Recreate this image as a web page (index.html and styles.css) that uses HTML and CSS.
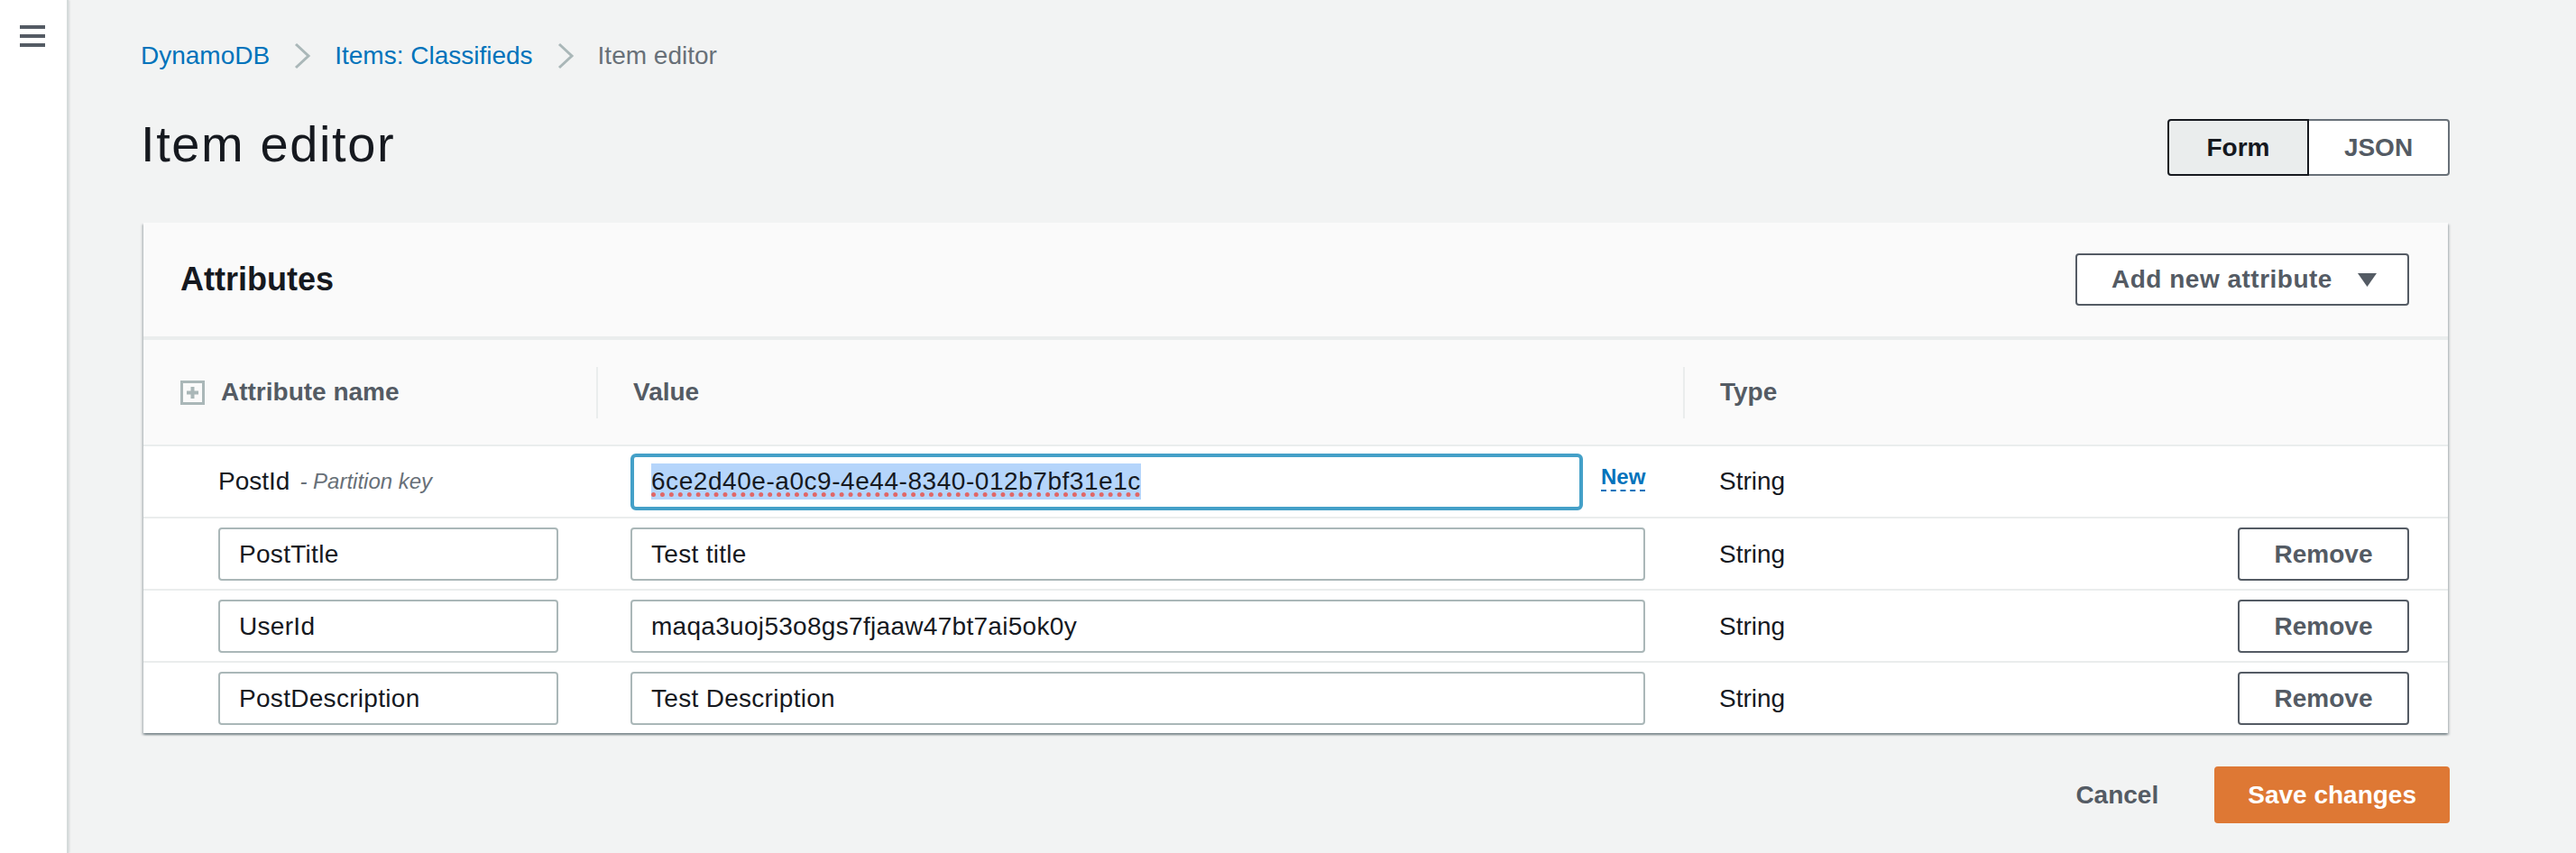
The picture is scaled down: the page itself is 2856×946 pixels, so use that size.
FILE: index.html
```html
<!DOCTYPE html>
<html lang="en">
<head>
<meta charset="utf-8">
<title>Item editor</title>
<link rel="stylesheet" href="styles.css">
</head>
<body>
<div class="app">
  <aside class="sidebar">
    <button class="menu-btn" aria-label="Open navigation">
      <svg width="28" height="24" viewBox="0 0 28 24">
        <rect x="0" y="0" width="28" height="4" fill="#545b64"/>
        <rect x="0" y="10" width="28" height="4" fill="#545b64"/>
        <rect x="0" y="20" width="28" height="4" fill="#545b64"/>
      </svg>
    </button>
  </aside>
  <main class="main">
    <nav class="breadcrumbs">
      <a class="crumb-link" href="#">DynamoDB</a>
      <svg class="chev" width="20" height="30" viewBox="0 0 20 30"><polyline points="3,2 17,15 3,28" fill="none" stroke="#aab7b8" stroke-width="3"/></svg>
      <a class="crumb-link" href="#">Items: Classifieds</a>
      <svg class="chev" width="20" height="30" viewBox="0 0 20 30"><polyline points="3,2 17,15 3,28" fill="none" stroke="#aab7b8" stroke-width="3"/></svg>
      <span class="crumb-current">Item editor</span>
    </nav>

    <div class="page-header">
      <h1 class="page-title">Item editor</h1>
      <div class="seg">
        <button class="seg-btn seg-active">Form</button>
        <button class="seg-btn seg-idle">JSON</button>
      </div>
    </div>

    <section class="panel">
      <div class="panel-header">
        <h2 class="panel-title">Attributes</h2>
        <button class="btn btn-dropdown">
          <span>Add new attribute</span>
          <svg class="caret" width="21" height="15" viewBox="0 0 21 15"><polygon points="0,0 21,0 10.5,15" fill="#545b64"/></svg>
        </button>
      </div>

      <div class="thead">
        <div class="hcell hcell-first">
          <svg class="expand-icon" width="27" height="27" viewBox="0 0 27 27">
            <rect x="1.5" y="1.5" width="24" height="24" fill="#fafafa" stroke="#aab7b8" stroke-width="3"/>
            <rect x="11.5" y="7" width="4" height="13" fill="#aab7b8"/>
            <rect x="7" y="11.5" width="13" height="4" fill="#aab7b8"/>
          </svg>
          <span class="htext">Attribute name</span>
        </div>
        <div class="hcell"><span class="col-sep"></span><span class="htext htext-gap">Value</span></div>
        <div class="hcell"><span class="col-sep"></span><span class="htext htext-gap">Type</span></div>
      </div>

      <div class="trow trow-first">
        <div class="cell cell-name"><span class="key-name">PostId</span><span class="key-note">- Partition key</span></div>
        <div class="cell cell-value">
          <div class="field field-focus"><span class="sel"><span class="spell">6ce2d40e-a0c9-4e44-8340-012b7bf31e1c</span></span></div>
          <a class="new-link" href="#">New</a>
        </div>
        <div class="cell cell-type"><span>String</span></div>
      </div>

      <div class="trow">
        <div class="cell cell-name"><div class="field field-name">PostTitle</div></div>
        <div class="cell cell-value"><div class="field field-value">Test title</div></div>
        <div class="cell cell-type"><span>String</span><button class="btn btn-remove">Remove</button></div>
      </div>

      <div class="trow">
        <div class="cell cell-name"><div class="field field-name">UserId</div></div>
        <div class="cell cell-value"><div class="field field-value">maqa3uoj53o8gs7fjaaw47bt7ai5ok0y</div></div>
        <div class="cell cell-type"><span>String</span><button class="btn btn-remove">Remove</button></div>
      </div>

      <div class="trow">
        <div class="cell cell-name"><div class="field field-name">PostDescription</div></div>
        <div class="cell cell-value"><div class="field field-value">Test Description</div></div>
        <div class="cell cell-type"><span>String</span><button class="btn btn-remove">Remove</button></div>
      </div>
    </section>

    <div class="footer">
      <button class="btn-link">Cancel</button>
      <button class="btn-primary">Save changes</button>
    </div>
  </main>
</div>
</body>
</html>
```

FILE: styles.css
```css
* { box-sizing: border-box; }

html, body {
  margin: 0;
  padding: 0;
}

body {
  background: #f2f3f3;
  font-family: "Liberation Sans", Arial, sans-serif;
  font-size: 28px;
  color: #16191f;
}

button {
  font-family: "Liberation Sans", Arial, sans-serif;
  cursor: pointer;
}

.app {
  display: flex;
  min-height: 100vh;
}

/* Sidebar */
.sidebar {
  width: 76px;
  flex: none;
  background: #ffffff;
  border-right: 2px solid #d5dbdb;
  box-shadow: 1px 0 2px rgba(0, 28, 36, 0.12);
  padding: 28px 0 0 22px;
}

.menu-btn {
  display: block;
  border: 0;
  padding: 0;
  background: none;
  width: 28px;
  height: 24px;
}

.menu-btn svg { display: block; }

/* Main */
.main {
  flex: 1;
  min-width: 0;
  padding: 42px 140px 0 80px;
}

.breadcrumbs {
  display: flex;
  align-items: center;
  height: 40px;
  line-height: 40px;
  font-size: 28px;
}

.crumb-link {
  color: #0073bb;
  text-decoration: none;
}

.crumb-current { color: #687078; }

.chev {
  flex: none;
  display: block;
  margin: 0 26px 0 26px;
}

.page-header {
  display: flex;
  justify-content: space-between;
  align-items: flex-start;
  margin-top: 46px;
}

.page-title {
  margin: 0;
  font-size: 56px;
  line-height: 64px;
  font-weight: 400;
  letter-spacing: 1.6px;
  color: #16191f;
}

.seg {
  display: flex;
  margin-top: 4px;
}

.seg-btn {
  height: 63px;
  font-size: 28px;
  font-weight: 700;
  padding: 0;
}

.seg-active {
  width: 157px;
  background: #eaeded;
  color: #16191f;
  border: 2px solid #16191f;
  border-radius: 4px 0 0 4px;
}

.seg-idle {
  width: 156px;
  background: #ffffff;
  color: #545b64;
  border: 2px solid #687078;
  border-left: 0;
  border-radius: 0 4px 4px 0;
}

/* Panel */
.panel {
  margin: 52px 2px 0 3px;
  background: #ffffff;
  box-shadow: 0 2px 2px rgba(0, 28, 36, 0.3),
              2px 2px 2px rgba(0, 28, 36, 0.15),
              -2px 2px 2px rgba(0, 28, 36, 0.15);
}

.panel-header {
  display: flex;
  align-items: center;
  justify-content: space-between;
  height: 130px;
  padding: 0 43px 0 41px;
  background: #fafafa;
  border-bottom: 4px solid #eaeded;
}

.panel-title {
  margin: 0;
  font-size: 36px;
  line-height: 40px;
  font-weight: 700;
  color: #16191f;
}

.btn {
  background: #ffffff;
  border: 2px solid #545b64;
  border-radius: 4px;
  color: #545b64;
  font-size: 28px;
  font-weight: 700;
}

.btn-dropdown {
  display: flex;
  align-items: center;
  justify-content: space-between;
  width: 370px;
  height: 58px;
  padding: 0 34px 0 38px;
  letter-spacing: 0.5px;
}

.caret { display: block; flex: none; }

/* Table */
.thead,
.trow {
  display: grid;
  grid-template-columns: 502px 1205px 1fr;
}

.thead {
  height: 118px;
  background: #fafafa;
  border-bottom: 2px solid #eaeded;
}

.hcell {
  display: flex;
  align-items: center;
}

.hcell-first { padding-left: 41px; }

.expand-icon { display: block; flex: none; margin-right: 18px; }

.htext {
  font-size: 28px;
  font-weight: 700;
  color: #545b64;
}

.htext-gap { margin-left: 39px; }

.col-sep {
  display: block;
  width: 2px;
  height: 57px;
  background: #eaeded;
}

.trow {
  height: 80px;
  padding: 10px 0 9px;
  border-top: 2px solid #eaeded;
}

.trow-first {
  height: 78px;
  padding: 0;
  border-top: 0;
}

.cell {
  display: flex;
  align-items: center;
}

.cell-name { padding-left: 83px; }
.cell-value { padding-left: 38px; }
.cell-type {
  padding: 0 43px 0 40px;
  justify-content: space-between;
}

.key-name { color: #16191f; }

.key-note {
  margin-left: 11px;
  font-size: 24px;
  font-style: italic;
  color: #687078;
}

.field {
  display: flex;
  align-items: center;
  height: 59px;
  border: 2px solid #aab7b8;
  border-radius: 4px;
  padding-left: 21px;
  background: #ffffff;
  color: #16191f;
  font-size: 28px;
  letter-spacing: 0.3px;
  white-space: nowrap;
}

.field-name { width: 377px; }
.field-value { width: 1125px; }

.field-focus {
  width: 1056px;
  height: 63px;
  border: 4px solid #44a0c8;
  border-radius: 6px;
  padding-left: 19px;
  letter-spacing: 0.55px;
}

.sel {
  display: inline-block;
  background: #b5d5fb;
  line-height: 40px;
}

.spell {
  text-decoration: underline dotted #e06767;
  text-decoration-thickness: 5px;
  text-underline-offset: 3px;
}

.new-link {
  margin-left: 20px;
  margin-bottom: 6px;
  font-size: 24px;
  line-height: 24px;
  font-weight: 700;
  color: #0073bb;
  text-decoration: none;
  padding-bottom: 2px;
  border-bottom: 2px dashed #0073bb;
}

.btn-remove {
  width: 190px;
  height: 59px;
  padding: 0;
}

/* Footer */
.footer {
  display: flex;
  justify-content: flex-end;
  align-items: center;
  margin-top: 37px;
}

.btn-link {
  background: none;
  border: 0;
  padding: 0;
  margin-right: 62px;
  color: #545b64;
  font-size: 28px;
  font-weight: 700;
}

.btn-primary {
  height: 63px;
  padding: 0 37px;
  background: #de7834;
  border: 0;
  border-radius: 4px;
  color: #ffffff;
  font-size: 28px;
  font-weight: 700;
}
```
